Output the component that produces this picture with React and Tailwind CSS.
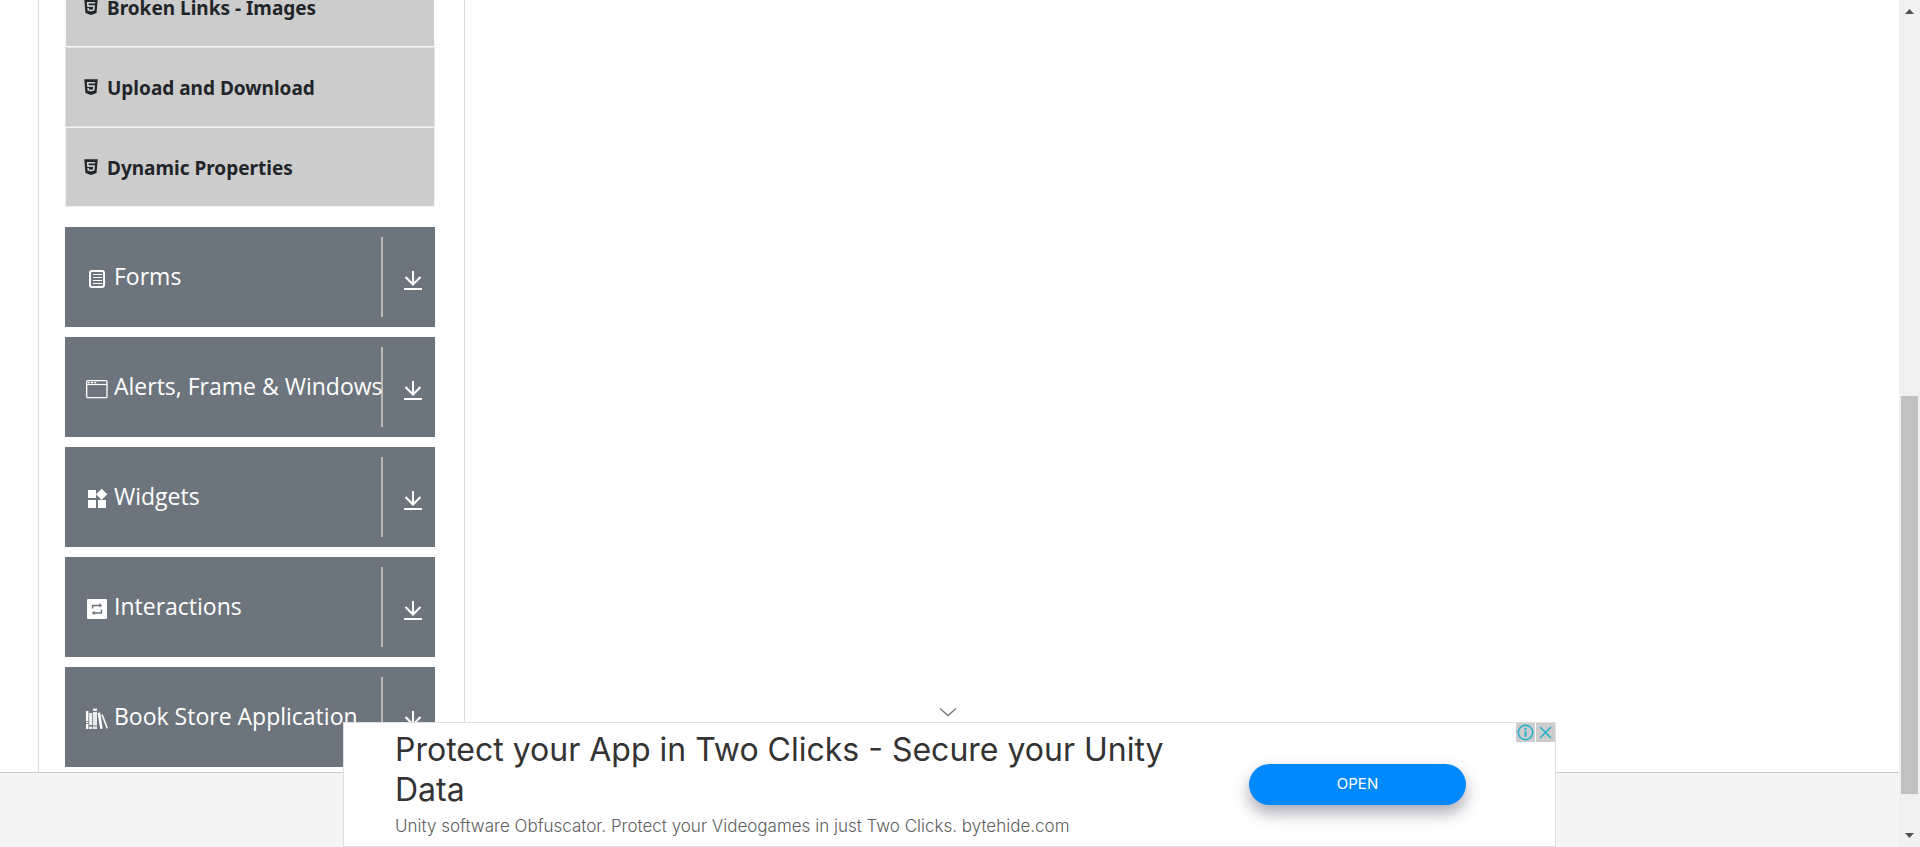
import React from 'react';
import { FaHtml5 } from 'react-icons/fa';
import { MdWidgets } from 'react-icons/md';

const links = [
  { label: 'Broken Links - Images', border: 'border-[#f8f9fa]' },
  { label: 'Upload and Download', border: 'border-[#dee2e6]' },
  { label: 'Dynamic Properties', border: 'border-[#f1f3f5]' },
];

function FormsIcon() {
  return (
    <svg viewBox="0 0 22 22" className="size-[22px]" fill="none" stroke="currentColor" aria-hidden="true">
      <rect x="4" y="3" width="14" height="16" rx="2" strokeWidth="2" />
      <path d="M7 6.5h9M7 9.5h9M7 12.5h9M7 15.5h9" strokeWidth="1" />
    </svg>
  );
}

function WindowIcon() {
  return (
    <svg viewBox="0 0 22 22" className="size-[22px]" fill="none" stroke="currentColor" aria-hidden="true">
      <rect x="0.7" y="2.7" width="20.3" height="17" rx="1" strokeWidth="1.3" />
      <path d="M1 6.5h20" strokeWidth="1.2" />
      <path d="M2 4.6h1.8M5 4.6h2M8.2 4.6h2" strokeWidth="1.4" />
    </svg>
  );
}

function InteractionsIcon() {
  return (
    <svg viewBox="0 0 22 22" className="size-[22px]" aria-hidden="true">
      <rect x="1" y="1" width="20" height="20" rx="1" fill="currentColor" />
      <path d="M6.6 10.500V7.400h8M15.400 11.500v3.400h-8" fill="none" stroke="#6c757d" strokeWidth="1.5" />
      <path d="M13.4 5l2.800 2.400-2.800 2.400zM8.600 12.500L5.800 14.900l2.800 2.400z" fill="#6c757d" />
    </svg>
  );
}

function BooksIcon() {
  return (
    <svg viewBox="0 0 22 22" className="size-[22px]" fill="currentColor" aria-hidden="true">
      <path d="M0 3h2.4v10H0zM0 13.8h2.4v1.4H0zM0 16h2.4v5H0z" />
      <path d="M3.2 5h3v12h-3zM3.2 18.4h3V21h-3z" opacity="0.9" />
      <path d="M7 .5h4V3H7zM7 4h4v13.5H7zM7 18.5h4V21H7z" opacity="0.85" />
      <path d="M11.6 5l2.6-.5L16.6 20.6l-2.4.4z" />
      <path d="M15.2 7l1.6-.8L22 20l-1.4.8z" opacity="0.9" />
    </svg>
  );
}

function WidgetsIcon() {
  return <MdWidgets className="size-[24px] shrink-0 -mx-px" aria-hidden="true" />;
}

const groups = [
  { label: 'Forms', Icon: FormsIcon },
  { label: 'Alerts, Frame & Windows', Icon: WindowIcon },
  { label: 'Widgets', Icon: WidgetsIcon },
  { label: 'Interactions', Icon: InteractionsIcon },
  { label: 'Book Store Application', Icon: BooksIcon },
];

function DownArrow() {
  return (
    <svg viewBox="0 0 20 20" className="size-5" fill="none" stroke="currentColor" strokeWidth="2" aria-hidden="true">
      <path d="M10 0v13M2.500 6l7.500 7.500L17.500 6M1 18h18" />
    </svg>
  );
}

function Sidebar() {
  return (
    <nav className="w-[427px] border-x border-[#dcdcdc] pl-[26px] pr-[29px] pb-[5px]">
      <ul className="-mt-[33px] mb-5">
        {links.map(({ label, border }) => (
          <li key={label} className={`h-20 border bg-[#ccc] ${border}`}>
            <a href="#" className="flex h-full items-center gap-[9px] pl-[18px] font-['Noto_Sans',sans-serif] text-[19px] font-bold text-[#212529]">
              <FaHtml5 className="h-[18px] w-[14px]" aria-hidden="true" />
              <span className="pt-0.5">{label}</span>
            </a>
          </li>
        ))}
      </ul>
      <div className="flex flex-col gap-[10px]">
        {groups.map(({ label, Icon }) => (
          <button key={label} type="button" className="flex h-[100px] w-full items-center bg-[#6c757d] py-[10px] text-left text-white">
            <span className="flex h-full w-[318px] items-center gap-1.5 border-r-2 border-[#b8b8b4] pl-[21px] text-[23px] whitespace-nowrap">
              <span className="w-[22px] shrink-0 pt-1">
                <Icon />
              </span>
              <span className="pb-0.5">{label}</span>
            </span>
            <span className="flex flex-1 justify-center pt-[7px] pl-2">
              <DownArrow />
            </span>
          </button>
        ))}
      </div>
    </nav>
  );
}

function AdBanner() {
  return (
    <aside className="absolute inset-x-0 bottom-0 mx-auto flex w-[1213px] max-w-full flex-col items-center font-['Inter',sans-serif]">
      <button type="button" aria-label="Collapse" className="flex h-4 items-center pr-1 pb-1 text-[#777]">
        <svg viewBox="0 0 18 10" className="h-[10px] w-[18px]" fill="none" stroke="currentColor" strokeWidth="1.4" aria-hidden="true">
          <path d="M1 1.5l8 7 8-7" />
        </svg>
      </button>
      <div className="relative flex h-[125px] w-full items-center justify-between border border-[#e0e0e0] bg-white pr-[89px] pl-[51px]">
        <div className="w-[780px]">
          <h2 className="text-[32px] leading-10 text-[#333]">Protect your App in Two Clicks - Secure your Unity Data</h2>
          <p className="pt-0.5 text-[17px] leading-7 font-light text-[#606060]">
            Unity software Obfuscator. Protect your Videogames in just Two Clicks. bytehide.com
          </p>
        </div>
        <button type="button" className="h-[41px] w-[217px] rounded-full bg-[#08f] text-[15px] text-white shadow-[0_8px_16px_rgba(40,40,70,0.4)]">
          OPEN
        </button>
        <div className="absolute top-0 right-0 flex gap-px text-[#1fb4cc]">
          <button type="button" aria-label="Ad information" className="bg-[#ccc]">
            <svg viewBox="0 0 19 19" className="size-[19px]" fill="none" stroke="currentColor" aria-hidden="true">
              <circle cx="9.5" cy="9.5" r="7.2" strokeWidth="1.5" />
              <path d="M9.5 8.3v5.4M9.5 5v2" strokeWidth="2" />
            </svg>
          </button>
          <button type="button" aria-label="Close ad" className="bg-[#ccc]">
            <svg viewBox="0 0 19 19" className="size-[19px]" fill="none" stroke="currentColor" strokeWidth="1.5" aria-hidden="true">
              <path d="M4 4l11 11M15 4L4 15" />
            </svg>
          </button>
        </div>
      </div>
    </aside>
  );
}

function ScrollRail() {
  return (
    <div className="flex w-[21px] flex-col items-center bg-[#f0f0f0] py-[9px] text-[#505050]" aria-hidden="true">
      <svg viewBox="0 0 9 5" className="h-[5px] w-[9px]" fill="currentColor">
        <path d="M0 5L4.500 0L9 5z" />
      </svg>
      <div className="grow-[382]" />
      <div className="w-[17px] grow-[398] bg-[#c1c1c1]" />
      <div className="grow-[39]" />
      <svg viewBox="0 0 9 5" className="h-[5px] w-[9px]" fill="currentColor">
        <path d="M0 0L4.500 5L9 0z" />
      </svg>
    </div>
  );
}

export default function App() {
  return (
    <div className="flex h-screen overflow-hidden bg-white font-['Open_Sans','Noto_Sans',sans-serif]">
      <div className="relative flex min-w-0 flex-1 flex-col overflow-hidden">
        <main className="flex pl-[38px]">
          <Sidebar />
        </main>
        <footer className="flex-1 border-t border-[#c8c8c8] bg-[#f4f4f4]" />
        <AdBanner />
      </div>
      <ScrollRail />
    </div>
  );
}
